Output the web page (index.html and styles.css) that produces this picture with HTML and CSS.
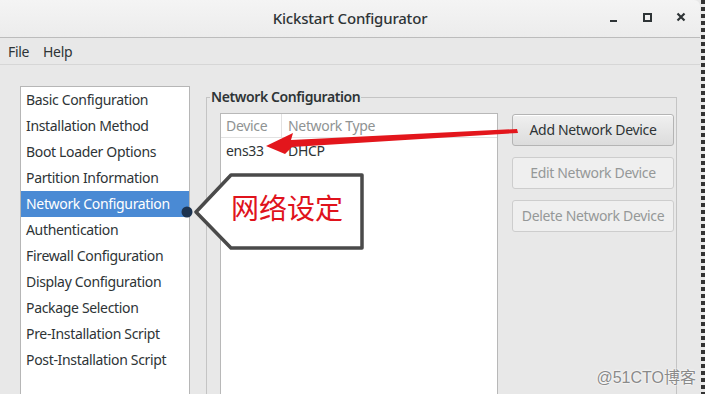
FILE: index.html
```html
<!DOCTYPE html>
<html>
<head>
<meta charset="utf-8">
<link rel="stylesheet" href="styles.css">
</head>
<body>
<div class="screen">
  <div class="window">
    <div class="titlebar">
      <div class="title">Kickstart Configurator</div>
      <div class="controls">
        <span class="ctl ctl-min"></span>
        <span class="ctl ctl-max"></span>
        <span class="ctl ctl-close">
          <svg width="10" height="10" viewBox="0 0 10 10"><path d="M1.5 1.5 L8.5 8.5 M8.5 1.5 L1.5 8.5" stroke="#2e3436" stroke-width="2.2"/></svg>
        </span>
      </div>
    </div>
    <div class="menubar">
      <span class="menu">File</span>
      <span class="menu">Help</span>
    </div>
    <div class="main">
      <div class="sidebar">
        <div class="item">Basic Configuration</div>
        <div class="item">Installation Method</div>
        <div class="item">Boot Loader Options</div>
        <div class="item">Partition Information</div>
        <div class="item selected">Network Configuration</div>
        <div class="item">Authentication</div>
        <div class="item">Firewall Configuration</div>
        <div class="item">Display Configuration</div>
        <div class="item">Package Selection</div>
        <div class="item">Pre-Installation Script</div>
        <div class="item">Post-Installation Script</div>
      </div>
      <fieldset class="frame">
        <legend class="legend">Network Configuration</legend>
        <div class="frame-body">
          <div class="tree">
            <div class="tree-head">
              <div class="col col-dev">Device</div>
              <div class="col col-type">Network Type</div>
            </div>
            <div class="tree-row">
              <div class="col col-dev">ens33</div>
              <div class="col col-type">DHCP</div>
            </div>
          </div>
          <div class="buttons">
            <div class="btn">Add Network Device</div>
            <div class="btn disabled">Edit Network Device</div>
            <div class="btn disabled">Delete Network Device</div>
          </div>
        </div>
      </fieldset>
    </div>
  </div>
  <div class="edge"></div>

  <svg class="arrow" width="705" height="394" viewBox="0 0 705 394">
    <polygon points="266,146 293,133 291,140 517,129 518,133 292,147 285,154" fill="#e3161c"/>
  </svg>
  <div class="callout">
    <svg class="callout-shape" width="180" height="90" viewBox="0 0 180 90">
      <circle cx="7" cy="40" r="5.5" fill="#1d3350"/>
      <polygon points="51,3 182,3 182,76 51,76 16,40" fill="#ffffff" stroke="#4a4a4a" stroke-width="3.5" stroke-linejoin="round"/>
    </svg>
    <span class="callout-text">网络设定</span>
  </div>
  <div class="watermark">@51CTO博客</div>
</div>
</body>
</html>
```

FILE: styles.css
```css
html, body {
  margin: 0;
  padding: 0;
}
body {
  width: 705px;
  height: 394px;
  overflow: hidden;
  font-family: "Noto Sans", "DejaVu Sans", sans-serif;
  font-size: 14px;
  letter-spacing: -0.33px;
  color: #2e3436;
  background: #e8e8e8;
}
.screen {
  position: relative;
  display: flex;
  width: 705px;
  height: 394px;
  overflow: hidden;
}
.window {
  width: 700px;
  height: 394px;
  display: flex;
  flex-direction: column;
  background: #e8e8e8;
  overflow: hidden;
}
.edge {
  width: 5px;
  height: 394px;
  background: repeating-linear-gradient(to bottom, #333 0 4px, #e8e8e8 4px 7px);
  border-left: 1px solid #e8e8e8;
  box-sizing: border-box;
}
.titlebar {
  height: 37px;
  flex: none;
  display: flex;
  align-items: center;
  justify-content: center;
  position: relative;
  background: linear-gradient(#f4f4f4, #ececec);
  border-bottom: 1px solid #bcbcbc;
  border-top-right-radius: 6px;
}
.title {
  font-size: 15px;
  font-weight: 500;
  letter-spacing: -0.2px;
  color: #2e3436;
  margin-top: -1px;
}
.controls {
  position: absolute;
  right: 14px;
  top: 12px;
  display: flex;
  gap: 24px;
  align-items: center;
}
.ctl {
  width: 10px;
  height: 10px;
  display: flex;
  align-items: center;
  justify-content: center;
}
.ctl-min::after {
  content: "";
  width: 7px;
  height: 2px;
  background: #2e3436;
  margin-top: 7px;
}
.ctl-max::after {
  content: "";
  width: 5px;
  height: 5px;
  border: 2px solid #2e3436;
}
.menubar {
  height: 26px;
  flex: none;
  display: flex;
  align-items: center;
  gap: 14px;
  padding-left: 8px;
  border-bottom: 1px solid #d6d6d6;
  background: #e8e8e8;
}
.menu {
  font-size: 14px;
}
.main {
  flex: 1;
  display: flex;
  align-items: flex-start;
  padding-left: 20px;
}
.sidebar {
  width: 168px;
  height: 330px;
  margin-top: 21px;
  background: #fff;
  border: 1px solid #b6b6b6;
  padding-top: 0;
  flex: none;
}
.item {
  height: 26px;
  line-height: 26px;
  padding-left: 5px;
  white-space: nowrap;
}
.item.selected {
  background: #4a8ad4;
  color: #fff;
}
.frame {
  margin: 22px 0 0 16px;
  padding: 0 0 0 3px;
  width: 466px;
  height: 330px;
  border: 1px solid #c4c4c4;
  box-sizing: content-box;
  min-width: 0;
}
.legend {
  padding: 0 1px;
  line-height: 20px;
  font-size: 14px;
  font-weight: 600;
  letter-spacing: -0.4px;
  color: #2e3436;
}
.frame-body {
  display: flex;
  align-items: flex-start;
  padding: 6px 0 0 10px;
  gap: 14px;
}
.tree {
  width: 276px;
  height: 300px;
  background: #fff;
  border: 1px solid #b8b8b8;
  flex: none;
}
.tree-head {
  height: 23px;
  display: flex;
  border-bottom: 1px solid #e2e2e2;
  color: #8f9393;
}
.tree-head .col {
  line-height: 23px;
}
.tree-head .col-dev {
  border-right: 1px solid #e2e2e2;
}
.col-dev {
  width: 55px;
  padding-left: 5px;
}
.col-type {
  padding-left: 6px;
}
.tree-row {
  height: 26px;
  display: flex;
  line-height: 26px;
}
.tree-row .col-dev {
  padding-right: 1px;
}
.buttons {
  display: flex;
  flex-direction: column;
  gap: 11px;
  width: 162px;
  margin-top: 1px;
}
.btn {
  height: 30px;
  line-height: 30px;
  text-align: center;
  border: 1px solid #b4b4b4;
  border-radius: 3px;
  background: linear-gradient(#f0f0f0, #dcdcdc);
  color: #2e3436;
  box-shadow: inset 0 1px 0 #fff;
}
.btn.disabled {
  background: #efefef;
  border-color: #cdcdcd;
  color: #959898;
  box-shadow: none;
}
.arrow {
  position: absolute;
  left: 0;
  top: 0;
  pointer-events: none;
}
.callout {
  position: absolute;
  left: 180px;
  top: 172px;
  width: 186px;
  height: 80px;
  letter-spacing: 0;
}
.callout-shape {
  position: absolute;
  left: 0;
  top: 0;
  overflow: visible;
}
.callout-text {
  position: absolute;
  left: 51px;
  top: 17px;
  font-family: "Noto Sans CJK SC", sans-serif;
  font-size: 28px;
  line-height: 36px;
  color: #e0131c;
}
.watermark {
  position: absolute;
  right: 9px;
  bottom: 6px;
  font-family: "Liberation Sans", "Noto Sans CJK SC", sans-serif;
  font-size: 16px;
  color: #8a8a8a;
  text-shadow: 0 0 2px #fff, 0 0 2px #fff;
  letter-spacing: 0;
}
```
